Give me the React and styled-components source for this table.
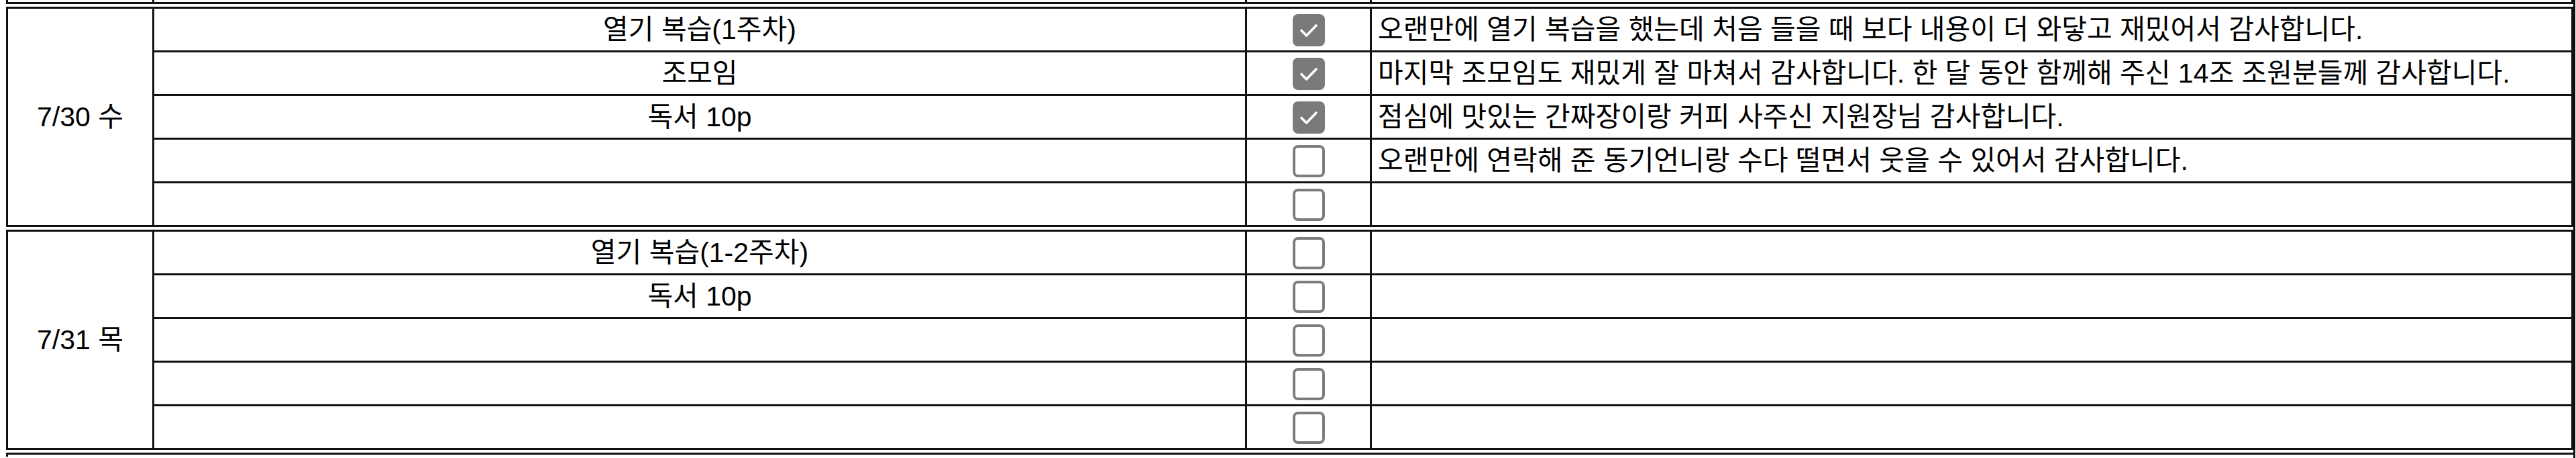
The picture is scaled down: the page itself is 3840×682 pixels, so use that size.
import React from 'react'
import styled, { createGlobalStyle } from 'styled-components'

const GlobalStyle = createGlobalStyle`
    html, body {
        margin: 0;
        padding: 0;
        background: #ffffff;
    }
    body {
        font-family: "Liberation Sans", "Noto Sans CJK KR", Arial, sans-serif;
        color: #000;
    }
`

const days = [
    {
        date: '7/30 수',
        rows: [
            { task: '열기 복습(1주차)', done: true, note: '오랜만에 열기 복습을 했는데 처음 들을 때 보다 내용이 더 와닿고 재밌어서 감사합니다.' },
            { task: '조모임', done: true, note: '마지막 조모임도 재밌게 잘 마쳐서 감사합니다. 한 달 동안 함께해 주신 14조 조원분들께 감사합니다.' },
            { task: '독서 10p', done: true, note: '점심에 맛있는 간짜장이랑 커피 사주신 지원장님 감사합니다.' },
            { task: '', done: false, note: '오랜만에 연락해 준 동기언니랑 수다 떨면서 웃을 수 있어서 감사합니다.' },
            { task: '', done: false, note: '' },
        ],
    },
    {
        date: '7/31 목',
        rows: [
            { task: '열기 복습(1-2주차)', done: false, note: '' },
            { task: '독서 10p', done: false, note: '' },
            { task: '', done: false, note: '' },
            { task: '', done: false, note: '' },
            { task: '', done: false, note: '' },
        ],
    },
]

const Check = ({ checked }) => (
    <Box checked={checked}>
        {checked && (
            <svg width="34" height="34" viewBox="0 0 34 34">
                <path d="M6 17.5 L13.5 25 L28 10" fill="none" stroke="#fff" strokeWidth="3.6" strokeLinecap="round" strokeLinejoin="round" />
            </svg>
        )}
    </Box>
)

const Columns = () => (
    <colgroup>
        <col style={{ width: 218 }} />
        <col style={{ width: 1629 }} />
        <col style={{ width: 186 }} />
        <col />
    </colgroup>
)

const DayTable = ({ day }) => (
    <Table>
        <Columns />
        <tbody>
            {day.rows.map((r, i) => (
                <tr key={i}>
                    {i === 0 && <DateCell rowSpan={day.rows.length}>{day.date}</DateCell>}
                    <TaskCell>{r.task}</TaskCell>
                    <CheckCell><Check checked={r.done} /></CheckCell>
                    <NoteCell>{r.note}</NoteCell>
                </tr>
            ))}
        </tbody>
    </Table>
)

const App = () => {
    return (
        <>
            <GlobalStyle />
            <Sheet>
                <TailTable>
                    <Columns />
                    <tbody>
                        <tr>
                            <TailCell />
                            <TailCell />
                            <TailCell />
                            <TailCell />
                        </tr>
                    </tbody>
                </TailTable>
                {days.map(d => <DayTable key={d.date} day={d} />)}
                <NextTop />
            </Sheet>
        </>
    )
}

export default App

const Sheet = styled.div`
    display: flex;
    flex-direction: column;
    gap: 4px;
    padding-left: 9px;
    margin-right: 1px;
    border-right: 3px solid #111;
    height: 682px;
    overflow: hidden;
    box-sizing: border-box;
`

const Table = styled.table`
    width: 100%;
    border-collapse: collapse;
    table-layout: fixed;
    border: 3px solid #111;
    flex-shrink: 0;

    td {
        border: 3px solid #111;
        height: 62px;
        padding: 0;
        font-size: 41px;
        line-height: 46px;
        vertical-align: middle;
        white-space: nowrap;
        overflow: hidden;
    }
`

const TailTable = styled(Table)`
    border-top: none;
    td {
        height: 3px;
        border-top: none;
    }
`

const TailCell = styled.td``

const NextTop = styled.div`
    flex-shrink: 0;
    height: 3px;
    border-left: 3px solid #111;
    border-top: 3px solid #111;
`

const DateCell = styled.td`
    text-align: center;
`

const TaskCell = styled.td`
    text-align: center;
`

const CheckCell = styled.td`
    text-align: center;
`

const NoteCell = styled.td`
    text-align: left;
    && {
        padding-left: 9px;
    }
`

const Box = styled.span`
    display: inline-flex;
    align-items: center;
    justify-content: center;
    vertical-align: middle;
    width: 48px;
    height: 48px;
    box-sizing: border-box;
    border-radius: 8px;
    background: ${p => (p.checked ? '#7a7a7a' : '#ffffff')};
    border: ${p => (p.checked ? 'none' : '4px solid #7d7d7d')};
`
